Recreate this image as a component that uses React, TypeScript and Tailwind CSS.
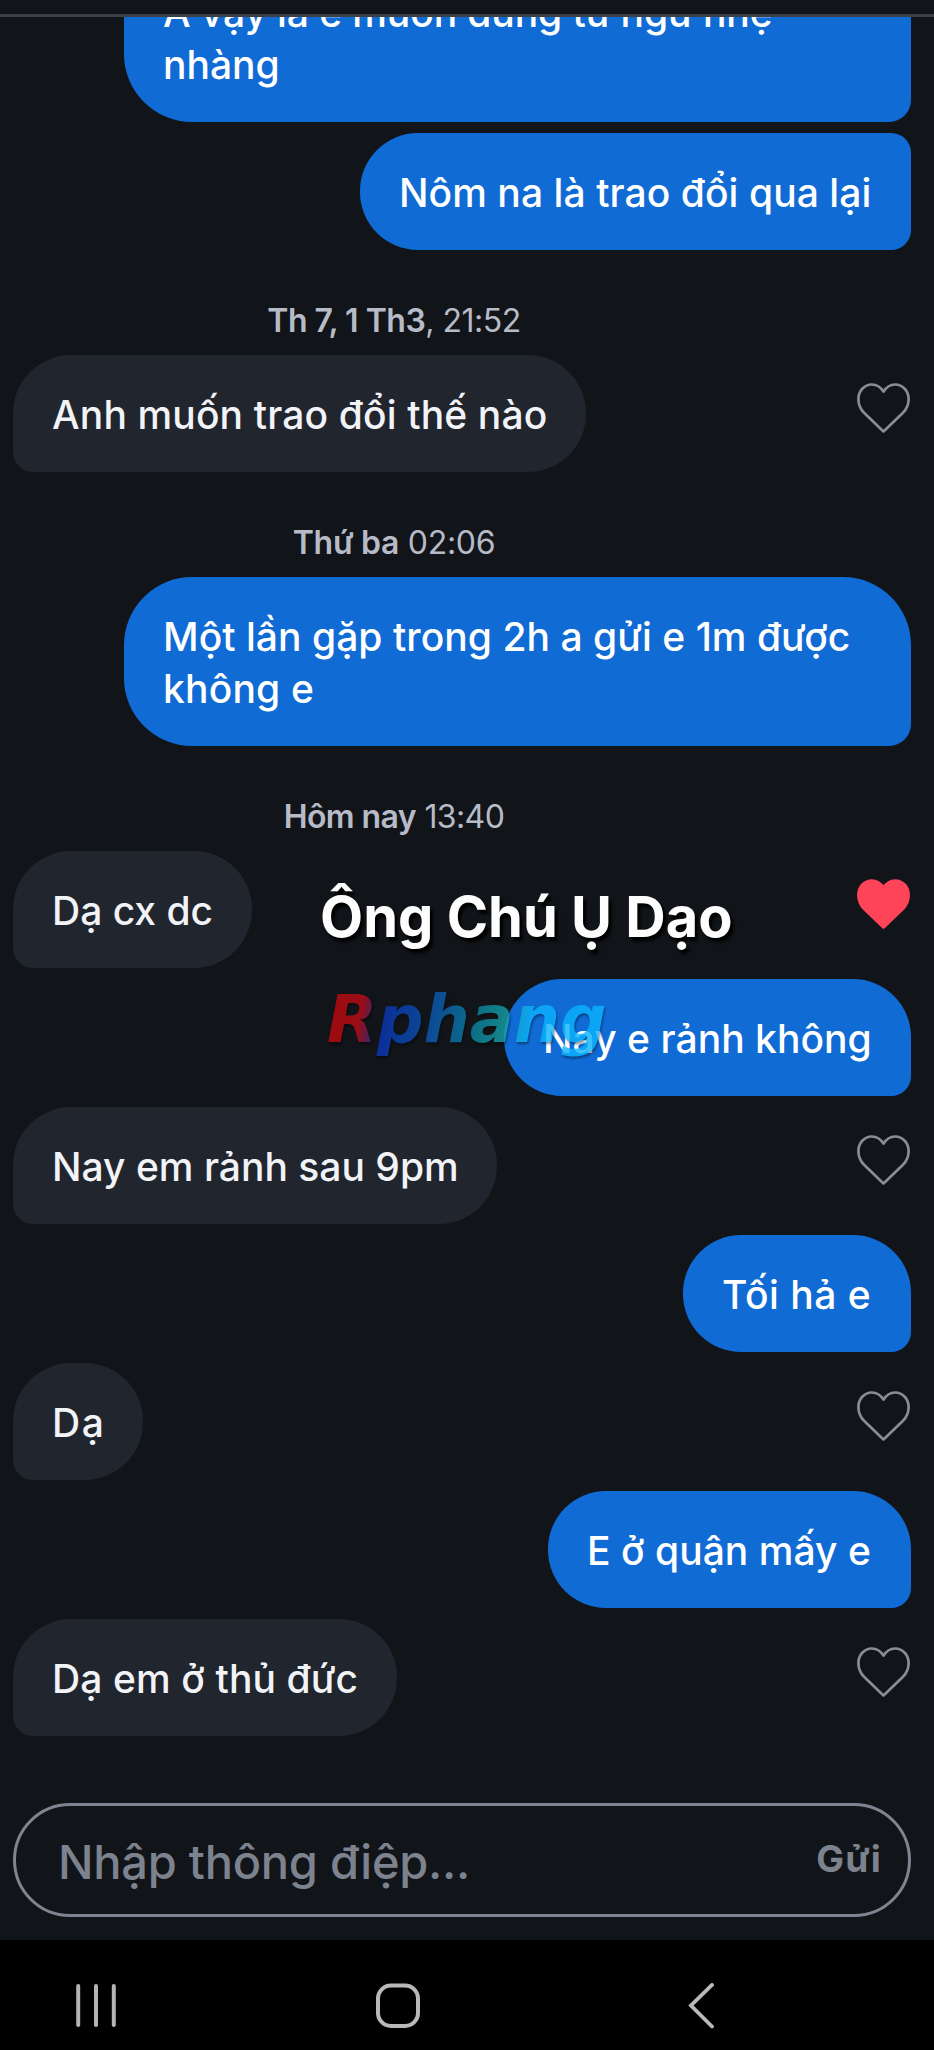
type Message = {
  kind: "in" | "out";
  lines: string[];
  gap?: string;
  box: string;
  tracking: string[];
  liked?: boolean;
};
type Stamp = { kind: "stamp"; day: string; time: string; tracking: string };

const thread: (Message | Stamp)[] = [
  {
    kind: "out",
    lines: ["À vậy là e muốn dùng từ ngữ nhẹ", "nhàng"],
    gap: "-mt-[64px]",
    box: "w-[787px] rounded-l-[68px] rounded-r-[22px]",
    tracking: ["tracking-[-0.09px]", "tracking-[0px]"],
  },
  {
    kind: "out",
    lines: ["Nôm na là trao đổi qua lại"],
    gap: "mt-[11px]",
    box: "w-[551px] rounded-l-[58px] rounded-r-[20px]",
    tracking: ["tracking-[0.07px]"],
  },
  { kind: "stamp", day: "Th 7, 1 Th3", time: ", 21:52", tracking: "tracking-[-0.5px]" },
  {
    kind: "in",
    lines: ["Anh muốn trao đổi thế nào"],
    box: "w-[573px] rounded-[58px] rounded-bl-[20px]",
    tracking: ["tracking-[0.14px]"],
  },
  { kind: "stamp", day: "Thứ ba", time: " 02:06", tracking: "tracking-[-0.3px]" },
  {
    kind: "out",
    lines: ["Một lần gặp trong 2h a gửi e 1m được", "không e"],
    box: "w-[787px] rounded-[68px] rounded-br-[22px]",
    tracking: ["tracking-[0.04px]", "tracking-[0.2px]"],
  },
  { kind: "stamp", day: "Hôm nay", time: " 13:40", tracking: "tracking-[-0.6px]" },
  {
    kind: "in",
    lines: ["Dạ cx dc"],
    box: "w-[239px] rounded-[58px] rounded-bl-[20px]",
    tracking: ["tracking-[0px]"],
    liked: true,
  },
  {
    kind: "out",
    lines: ["Nay e rảnh không"],
    gap: "mt-[11px]",
    box: "w-[407px] rounded-[58px] rounded-br-[20px]",
    tracking: ["tracking-[0.05px]"],
  },
  {
    kind: "in",
    lines: ["Nay em rảnh sau 9pm"],
    gap: "mt-[11px]",
    box: "w-[484px] rounded-[58px] rounded-bl-[20px]",
    tracking: ["tracking-[0.01px]"],
  },
  {
    kind: "out",
    lines: ["Tối hả e"],
    gap: "mt-[11px]",
    box: "w-[228px] rounded-[58px] rounded-br-[20px]",
    tracking: ["tracking-[0.5px]"],
  },
  {
    kind: "in",
    lines: ["Dạ"],
    gap: "mt-[11px]",
    box: "w-[130px] rounded-[58px] rounded-bl-[20px]",
    tracking: ["tracking-[1.5px]"],
  },
  {
    kind: "out",
    lines: ["E ở quận mấy e"],
    gap: "mt-[11px]",
    box: "w-[363px] rounded-[58px] rounded-br-[20px]",
    tracking: ["tracking-[0.05px]"],
  },
  {
    kind: "in",
    lines: ["Dạ em ở thủ đức"],
    gap: "mt-[11px]",
    box: "w-[384px] rounded-[58px] rounded-bl-[20px]",
    tracking: ["tracking-[0.12px]"],
  },
];

function Heart({ liked }: { liked?: boolean }) {
  return (
    <svg
      className="mr-px mb-[12px] h-[50px] w-[53px]"
      viewBox="0 0 53 50"
      fill={liked ? "#fe4458" : "none"}
      stroke={liked ? "#fe4458" : "#898c96"}
      strokeWidth="2.7"
      strokeLinejoin="round"
    >
      <path d="M26.5 8.6C23.6 4 19.4 1.5 14.8 1.5C7.2 1.5 1.4 8 1.4 16.2C1.4 21.6 3.4 26 7 29.8L26.5 48.4L46 29.8C49.6 26 51.6 21.6 51.6 16.2C51.6 8 45.8 1.5 38.2 1.5C33.6 1.5 29.4 4 26.5 8.6Z" />
    </svg>
  );
}

function Bubble({ message }: { message: Message }) {
  const incoming = message.kind === "in";
  return (
    <div className={`${message.gap ?? ""} flex items-center ${incoming ? "justify-between" : "justify-end"}`}>
      <div
        className={`${message.box} ${incoming ? "bg-[#21252e] text-[#f1f3f7]" : "bg-[#106bd5] text-white"} shrink-0 pt-[34px] pb-[31px] pl-[39px] text-[39px] leading-[52px] font-[450] whitespace-nowrap`}
      >
        {message.lines.map((line, i) => (
          <p key={line} className={message.tracking[i]}>
            {line}
          </p>
        ))}
      </div>
      {incoming && <Heart liked={message.liked} />}
    </div>
  );
}

export default function App() {
  return (
    <div className="relative flex h-[2050px] w-[934px] flex-col overflow-hidden bg-[#111418] font-[Inter,sans-serif]">
      <header className="h-[17px] shrink-0 border-b-[3px] border-[#3b3f46]" />

      <main className="flex h-[1719px] shrink-0 flex-col overflow-hidden pr-[23px] pl-[13px]">
        {thread.map((item, i) =>
          item.kind === "stamp" ? (
            <div
              key={i}
              className={`${item.tracking} h-[105px] shrink-0 pt-[51px] pr-[136px] text-center text-[32px] leading-[40px] whitespace-pre text-[#b7bbc7]`}
            >
              <span className="font-semibold">{item.day}</span>
              {item.time}
            </div>
          ) : (
            <Bubble key={i} message={item} />
          ),
        )}
      </main>

      <div className="h-[204px] shrink-0 pt-[67px] pr-[23px] pl-[13px]">
        <div className="flex h-[114px] items-center justify-between rounded-full border-[3px] border-[#7f8590] pr-[26px] pl-[42px] text-[#7c828e]">
          <span className="pt-[3px] text-[47px] leading-[60px] font-[450] tracking-[-0.25px]">Nhập thông điệp...</span>
          <span className="pb-[2px] text-[37px] leading-[48px] font-bold tracking-[1.2px]">Gửi</span>
        </div>
      </div>

      <nav className="flex h-[110px] shrink-0 items-start bg-black pt-[43px] pl-[76px]">
        <svg className="h-[46px] w-[40px]" viewBox="0 0 40 46" stroke="#b4b4b4" strokeWidth="4" strokeLinecap="round">
          <path d="M2.2 3V42M20 3V42M37.8 3V42" />
        </svg>
        <svg className="ml-[259px] h-[46px] w-[46px]" viewBox="0 0 46 46" fill="none" stroke="#b9b9b9" strokeWidth="4">
          <rect x="3" y="2.5" width="40" height="40.5" rx="13" />
        </svg>
        <svg className="ml-[266px] h-[48px] w-[30px]" viewBox="0 0 30 48" fill="none" stroke="#b9b9b9" strokeWidth="3.8" strokeLinecap="round">
          <path d="M25 1.9L4 22.5L25 43.5" />
        </svg>
      </nav>

      <div className="absolute top-[882px] left-[320px] text-[56px] leading-[70px] font-bold whitespace-nowrap text-[#fdfdfd] [text-shadow:3px_4px_3px_#000]">
        Ông Chú Ụ Dạo
      </div>
      <div className="absolute top-[980px] left-[327px] opacity-80 drop-shadow-[1px_2px_1px_rgba(0,0,0,0.5)]">
        <span className="block bg-[linear-gradient(100deg,#c00a0a_0%,#bd0c14_13%,#0a36b8_21%,#0a5cb4_38%,#0b87a4_52%,#17a3a8_62%,#0cb4ff_70%,#0cb4ff_100%)] bg-clip-text pr-[8px] font-['DejaVu_Sans',sans-serif] text-[65px] leading-[80px] font-bold whitespace-nowrap text-transparent italic">
          Rphang
        </span>
      </div>
    </div>
  );
}
